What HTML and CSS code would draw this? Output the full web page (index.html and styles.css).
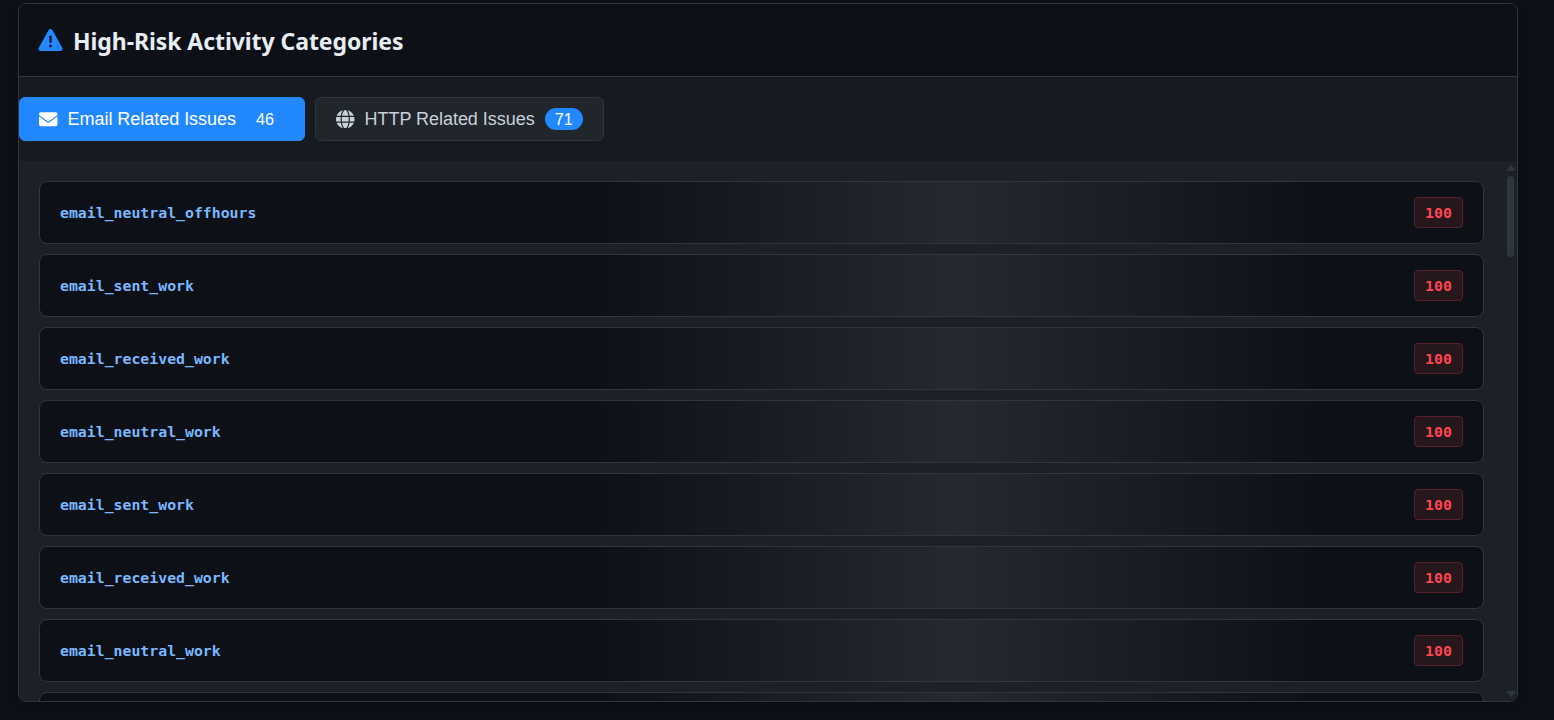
FILE: index.html
```html
<!DOCTYPE html>
<html lang="en">
<head>
<meta charset="utf-8">
<title>High-Risk Activity Categories</title>
<link rel="stylesheet" href="styles.css">
</head>
<body>
<section class="panel">
  <header class="panel-header">
    <svg class="warn" viewBox="0 0 24 22"><path d="M12 0C12.9 0 13.6.4 14 1.2L23.7 18.800C24.500 20.300 23.500 22 21.800 22H2.200C.5 22-.5 20.300.3 18.800L10 1.200C10.400.4 11.100 0 12 0Z" fill="#2188ff"/><path d="M11.200 7h1.700l-.2 6.500h-1.300z" fill="#0d1117" stroke="#0d1117" stroke-width=".7" stroke-linejoin="round"/><circle cx="12" cy="17" r="1.400" fill="#0d1117"/></svg>
    <h2 class="title">High-Risk Activity Categories</h2>
  </header>
  <nav class="tabs">
    <button class="tab active">
      <svg class="icon" viewBox="0 0 512 512"><path fill="currentColor" d="M48 64C21.500 64 0 85.500 0 112c0 15.100 7.100 29.300 19.200 38.400L236.800 313.600c11.400 8.500 27 8.500 38.400 0L492.800 150.400c12.100-9.100 19.200-23.300 19.200-38.400 0-26.500-21.500-48-48-48H48zM0 176V384c0 35.300 28.700 64 64 64H448c35.300 0 64-28.700 64-64V176L294.400 339.200c-22.800 17.100-54 17.100-76.800 0L0 176z"/></svg>
      <span>Email Related Issues</span>
      <span class="count">46</span>
    </button>
    <button class="tab">
      <svg class="icon" viewBox="0 0 512 512"><path fill="currentColor" d="M352 256c0 22.200-1.200 43.600-3.300 64H163.300c-2.200-20.400-3.300-41.800-3.300-64s1.200-43.600 3.300-64H348.700c2.200 20.400 3.300 41.800 3.300 64zm28.800-64H503.900c5.300 20.500 8.100 41.900 8.100 64s-2.800 43.500-8.100 64H380.800c2.100-20.600 3.200-42 3.200-64s-1.100-43.400-3.200-64zm112.600-32H376.700c-10-63.900-29.800-117.400-55.300-151.600 78.300 20.700 142 77.500 171.900 151.600zm-149.100 0H167.700c6.100-36.400 15.500-68.600 27-94.700 10.500-23.600 22.200-40.700 33.500-51.500C239.400 3.200 248.700 0 256 0s16.600 3.200 27.800 13.800c11.300 10.800 23 27.900 33.500 51.500 11.600 26 20.900 58.200 27 94.700zm-209 0H18.600C48.600 85.900 112.200 29.100 190.600 8.400 165.100 42.600 145.300 96.100 135.300 160zM8.100 192H131.200c-2.100 20.600-3.200 42-3.200 64s1.100 43.400 3.200 64H8.100C2.800 299.500 0 278.100 0 256s2.800-43.500 8.100-64zM194.700 446.600c-11.600-26-20.900-58.200-27-94.600H344.300c-6.100 36.400-15.500 68.600-27 94.600-10.500 23.600-22.200 40.700-33.500 51.500C272.600 508.800 263.300 512 256 512s-16.600-3.200-27.800-13.800c-11.300-10.800-23-27.900-33.500-51.500zM135.300 352c10 63.900 29.800 117.400 55.300 151.600C112.200 482.900 48.600 426.100 18.600 352H135.300zm358.100 0c-30 74.100-93.600 130.900-171.900 151.600 25.500-34.200 45.200-87.700 55.300-151.600H493.400z"/></svg>
      <span>HTTP Related Issues</span>
      <span class="count">71</span>
    </button>
  </nav>
  <div class="list-area">
    <div class="list">
      <div class="row"><span class="name">email_neutral_offhours</span><span class="score">100</span></div>
      <div class="row"><span class="name">email_sent_work</span><span class="score">100</span></div>
      <div class="row"><span class="name">email_received_work</span><span class="score">100</span></div>
      <div class="row"><span class="name">email_neutral_work</span><span class="score">100</span></div>
      <div class="row"><span class="name">email_sent_work</span><span class="score">100</span></div>
      <div class="row"><span class="name">email_received_work</span><span class="score">100</span></div>
      <div class="row"><span class="name">email_neutral_work</span><span class="score">100</span></div>
      <div class="row"></div>
    </div>
    <div class="scrollbar">
      <svg class="arrow" viewBox="0 0 8 6"><path d="M3.500 0H4.500L8 4.500V6H0V4.500Z"/></svg>
      <div class="track"><div class="thumb"></div></div>
      <svg class="arrow" viewBox="0 0 8 6"><path d="M3.500 6H4.500L8 1.500V0H0V1.500Z"/></svg>
    </div>
  </div>
</section>
</body>
</html>
```
FILE: styles.css
```css
* { box-sizing: border-box; }
body {
  margin: 0;
  height: 720px;
  padding: 3px 36px 0 18px;
  overflow: hidden;
  background: #0d1117;
}
.panel {
  display: flex;
  flex-direction: column;
  height: 699px;
  border: 1px solid #30363d;
  border-radius: 8px;
  overflow: hidden;
  background: #161b22;
  box-shadow: 0 4px 12px rgba(0, 0, 0, .3);
}
.panel-header {
  display: flex;
  align-items: center;
  gap: 10px;
  flex: none;
  height: 73px;
  padding: 0 19px;
  border-bottom: 1px solid #30363d;
  background: #0d1117;
}
.warn { width: 25px; height: 22px; }
.title {
  margin: 1px 0 0;
  font: 700 23px/32px "Noto Sans", sans-serif;
  letter-spacing: -.07px;
  color: #e6edf3;
  white-space: nowrap;
}
.tabs {
  display: flex;
  gap: 10px;
  flex: none;
  height: 84px;
  padding: 20px 0;
}
.tab {
  display: flex;
  align-items: center;
  gap: 10px;
  height: 44px;
  padding: 0 20px;
  border: 1px solid #30363d;
  border-radius: 6px;
  background: #21262d;
  color: #c9d1d9;
  font: 18px "Liberation Sans", Arial, sans-serif;
  letter-spacing: -.03px;
  white-space: nowrap;
}
.tab.active {
  width: 286px;
  padding: 0 19px;
  border-color: #2188ff;
  background: #2188ff;
  color: #fff;
}
.icon { width: 18.500px; height: 18.500px; }
.count {
  min-width: 38px;
  padding: 2px 10px;
  border-radius: 11px;
  background: #2188ff;
  color: #fff;
  font-size: 16.200px;
  line-height: 18px;
}
.list-area {
  display: flex;
  justify-content: space-between;
  flex: 1;
  min-height: 0;
  padding-left: 20px;
  background: #1c2128;
}
.list {
  display: flex;
  flex-direction: column;
  gap: 10px;
  width: 1445px;
  padding-top: 20px;
  overflow: hidden;
}
.row {
  display: flex;
  align-items: center;
  justify-content: space-between;
  flex: none;
  height: 63px;
  padding: 0 20px;
  border: 1px solid #30363d;
  border-radius: 8px;
  background: linear-gradient(90deg, transparent 38%, rgba(255, 255, 255, .1) 63.500%, transparent 89%) #0d1117;
}
.name, .score {
  font: 700 14.830px/20px "DejaVu Sans Mono", monospace;
}
.name { color: #79b8ff; }
.score {
  width: 49px;
  height: 31px;
  border: 1px solid #57202a;
  border-radius: 4px;
  background: #25171c;
  color: #ff4550;
  line-height: 29px;
  text-align: center;
}
.scrollbar {
  display: flex;
  flex-direction: column;
  width: 8px;
  margin-right: 2px;
  padding: 4px 0;
}
.arrow { width: 8px; height: 6px; fill: #30363d; flex: none; }
.track { flex: 1; padding-top: 5px; }
.thumb { width: 7px; height: 81px; border-radius: 4px; background: #30363d; }
```
